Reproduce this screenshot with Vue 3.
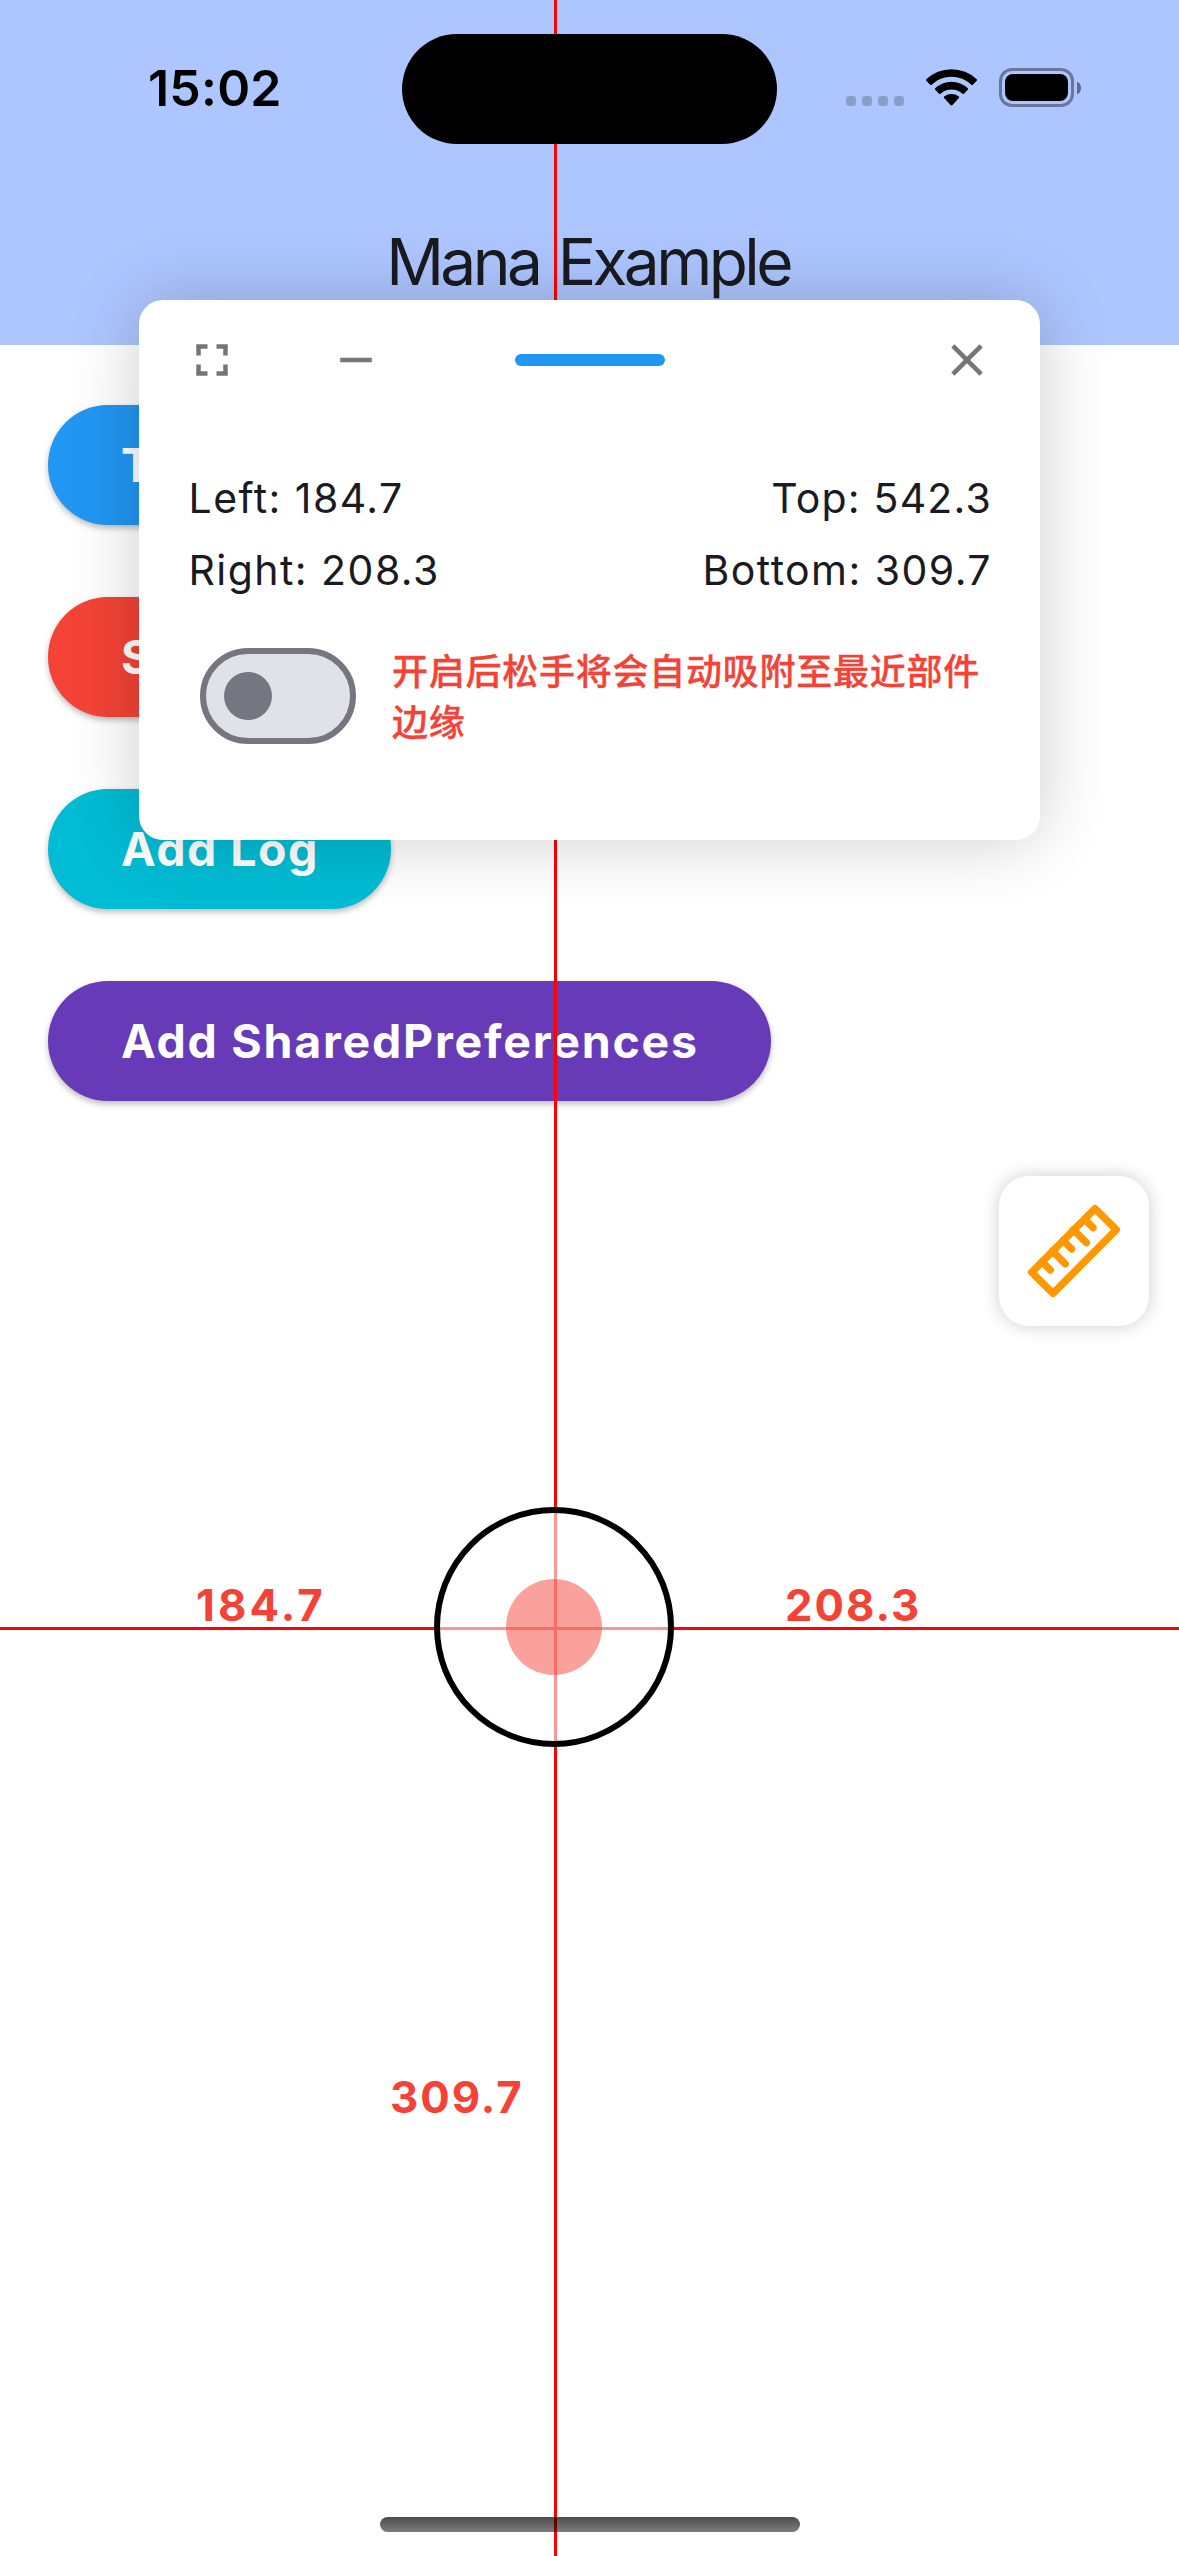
<script setup>
const buttons = [
  { label: 'T', tone: 'blue' },
  { label: 'S', tone: 'red' },
  { label: 'Add Log', tone: 'cyan' },
  { label: 'Add SharedPreferences', tone: 'purple' },
]
const offsets = { left: '184.7', top: '542.3', right: '208.3', bottom: '309.7' }
</script>

<template>
  <div class="screen">
    <header class="app-bar">
      <div class="status">
        <span class="clock">15:02</span>
        <div class="island"></div>
        <div class="indicators">
          <div class="signal"><i></i><i></i><i></i><i></i></div>
          <svg class="wifi" viewBox="0 0 17.14 12.2">
            <path d="M8.571 2.5c2.486 0 4.877.956 6.679 2.668a.356.356 0 0 0 .496-.004l1.297-1.31a.37.37 0 0 0-.003-.527 12.3 12.3 0 0 0-16.937 0 .37.37 0 0 0-.003.527l1.297 1.31a.356.356 0 0 0 .496.004A9.7 9.7 0 0 1 8.571 2.5z" />
            <path d="M8.571 6.75c1.366 0 2.683.508 3.695 1.425.137.13.352.127.486-.006l1.296-1.31a.37.37 0 0 0-.006-.528 7.97 7.97 0 0 0-10.939 0 .37.37 0 0 0-.006.528l1.296 1.31c.134.133.349.136.486.006a5.5 5.5 0 0 1 3.692-1.425z" />
            <path d="M11.06 9.65a.36.36 0 0 0-.01-.515 4.1 4.1 0 0 0-4.958 0 .36.36 0 0 0-.01.515l2.234 2.4a.36.36 0 0 0 .51 0z" />
          </svg>
          <div class="battery"><div class="shell"><div class="level"></div></div><div class="nub"></div></div>
        </div>
      </div>
      <h1 class="title">Mana Example</h1>
    </header>

    <main class="list">
      <button v-for="b in buttons" :key="b.tone" class="pill" :class="b.tone">{{ b.label }}</button>
    </main>

    <div class="line vertical"></div>
    <div class="line horizontal"></div>
    <div class="target"><div class="dot"></div></div>
    <span class="measure at-left">{{ offsets.left }}</span>
    <span class="measure at-right">{{ offsets.right }}</span>
    <span class="measure at-bottom">{{ offsets.bottom }}</span>

    <div class="fab">
      <svg viewBox="0 0 450 450">
        <path d="M288 98 352 161 162 352 98 289ZM129 257l25 25M160 225l39 39M192 193l26 26M223 161l39 39M256 129l26 26" />
      </svg>
    </div>

    <section class="panel">
      <div class="toolbar">
        <svg class="icon full" viewBox="0 0 24 24"><path d="M7 14H5v5h5v-2H7v-3zm-2-4h2V7h3V5H5v5zm12 7h-3v2h5v-5h-2v3zM14 5v2h3v3h2V5h-5z" /></svg>
        <svg class="icon min" viewBox="0 0 24 24"><path d="M19 13H5v-2h14v2z" /></svg>
        <div class="grip"></div>
        <svg class="icon close" viewBox="0 0 24 24"><path d="M19 6.41 17.59 5 12 10.59 6.41 5 5 6.41 10.59 12 5 17.59 6.41 19 12 13.41 17.59 19 19 17.59 13.41 12z" /></svg>
      </div>
      <div class="values">
        <div class="row first"><span>Left: {{ offsets.left }}</span><span>Top: {{ offsets.top }}</span></div>
        <div class="row"><span>Right: {{ offsets.right }}</span><span>Bottom: {{ offsets.bottom }}</span></div>
      </div>
      <div class="option">
        <div class="switch"><div class="knob"></div></div>
        <p class="hint">开启后松手将会自动吸附至最近部件边缘</p>
      </div>
    </section>

    <div class="home"></div>
  </div>
</template>

<style>
body { margin: 0; background: #fff; }
</style>

<style scoped>
.screen {
  position: relative;
  width: 1179px;
  height: 2556px;
  overflow: hidden;
  background: #fff;
  font-family: Inter, "Noto Sans CJK SC", sans-serif;
}
.app-bar { height: 345px; background: #adc6ff; overflow: hidden; }
.status { display: flex; align-items: center; height: 177px; }
.clock { width: 254px; margin: -2px 0 0 148px; font-size: 50px; font-weight: 600; letter-spacing: 0.2px; line-height: 60px; color: #000; }
.island { position: relative; z-index: 1; width: 375px; height: 110px; margin-top: 1px; border-radius: 56px; background: #000; }
.indicators { display: flex; height: 39px; align-items: center; margin: -2px 0 0 69px; }
.signal { display: flex; gap: 6px; margin-top: 27px; }
.signal i { width: 10px; height: 10px; border-radius: 3.5px; background: rgba(0, 0, 0, 0.2); }
.wifi { width: 51px; height: 37px; margin-left: 22px; }
.battery { display: flex; align-items: center; gap: 3px; margin-left: 22px; }
.shell { box-sizing: border-box; width: 75px; height: 39px; border: 3px solid rgba(0, 0, 0, 0.4); border-radius: 13px; padding: 3px; }
.level { height: 27px; border-radius: 8px; background: #000; }
.nub { width: 4px; height: 12px; border-radius: 0 4px 4px 0 / 0 6px 6px 0; background: rgba(0, 0, 0, 0.45); }
.title { margin: 46px 3px 0 0; text-align: center; font-size: 64px; font-weight: 400; line-height: 78px; letter-spacing: -3.6px; word-spacing: 4px; color: #1a1b20; }

.list { display: flex; flex-direction: column; align-items: flex-start; gap: 72px; padding: 60px 48px; }
.pill {
  height: 120px; padding: 0 72px 0 73px; border: 0; border-radius: 60px; color: #fff;
  font: 700 46.5px/120px Inter, sans-serif; letter-spacing: 1.5px; white-space: nowrap;
  box-shadow: 0 3px 6px rgba(0, 0, 0, 0.27);
}
.blue { width: 300px; text-align: left; background: #2196f3; }
.red { width: 300px; text-align: left; background: #f44336; }
.cyan { background: #00bcd4; }
.purple { letter-spacing: 1.76px; background: #673ab7; }

.line { position: absolute; background: #f00; }
.vertical { left: 554px; top: 0; width: 3px; height: 2556px; }
.horizontal { left: 0; top: 1627px; width: 1179px; height: 3px; }
.target {
  position: absolute; left: 434px; top: 1507px; box-sizing: border-box; width: 240px; height: 240px;
  display: flex; align-items: center; justify-content: center;
  border: 6px solid #000; border-radius: 50%; background: rgba(255, 255, 255, 0.59); background-clip: padding-box;
}
.dot { width: 96px; height: 96px; border-radius: 50%; background: rgba(244, 67, 54, 0.5); }
.measure { position: absolute; font-size: 43.7px; font-weight: 700; line-height: 54px; letter-spacing: 2px; color: #f44336; }
.at-left { left: 196px; top: 1579px; letter-spacing: 3.1px; }
.at-right { left: 785px; top: 1579px; }
.at-bottom { left: 390px; top: 2071px; }

.fab { position: absolute; left: 999px; top: 1176px; width: 150px; height: 150px; border-radius: 30px; background: #fff; box-shadow: 0 0 18px rgba(0, 0, 0, 0.2); }
.fab svg { display: block; width: 150px; height: 150px; fill: none; stroke: #ff9800; stroke-width: 22; stroke-linecap: round; stroke-linejoin: round; }

.panel {
  position: absolute; left: 139px; top: 300px; width: 901px; height: 540px; border-radius: 24px;
  background: #fff; box-shadow: 0 0 70px rgba(0, 0, 0, 0.2);
}
.toolbar { display: flex; align-items: center; height: 120px; padding: 0 46px 0 45.5px; }
.icon { width: 54px; height: 54px; fill: #757575; }
.min { margin-left: 90px; }
.grip { width: 150px; height: 12px; margin-left: 132px; border-radius: 6px; background: #2196f3; }
.close { margin-left: auto; }
.values { padding: 42px 48px 0 49.5px; }
.row { display: flex; justify-content: space-between; height: 72px; font-size: 41px; line-height: 72px; letter-spacing: 1.45px; color: #1a1b20; }
.first span:last-child { letter-spacing: 1.2px; }
.option { display: flex; align-items: flex-start; margin-top: 38px; padding-left: 61px; }
.switch { box-sizing: border-box; width: 156px; height: 96px; display: flex; align-items: center; margin-top: 4px; padding-left: 18px; border: 6px solid #74777f; border-radius: 48px; background: #e1e2e8; }
.knob { width: 48px; height: 48px; border-radius: 50%; background: #74777f; }
.hint { width: 604px; margin: 0 0 0 36px; font-family: "Noto Sans CJK SC", sans-serif; font-size: 36px; font-weight: 500; line-height: 51px; letter-spacing: 0.75px; color: #f44336; -webkit-text-stroke: 0.3px #f44336; }

.home { position: absolute; left: 380px; top: 2517px; width: 420px; height: 15px; border-radius: 8px; background: linear-gradient(rgba(0, 0, 0, 0.7), rgba(0, 0, 0, 0.51)); }
</style>
